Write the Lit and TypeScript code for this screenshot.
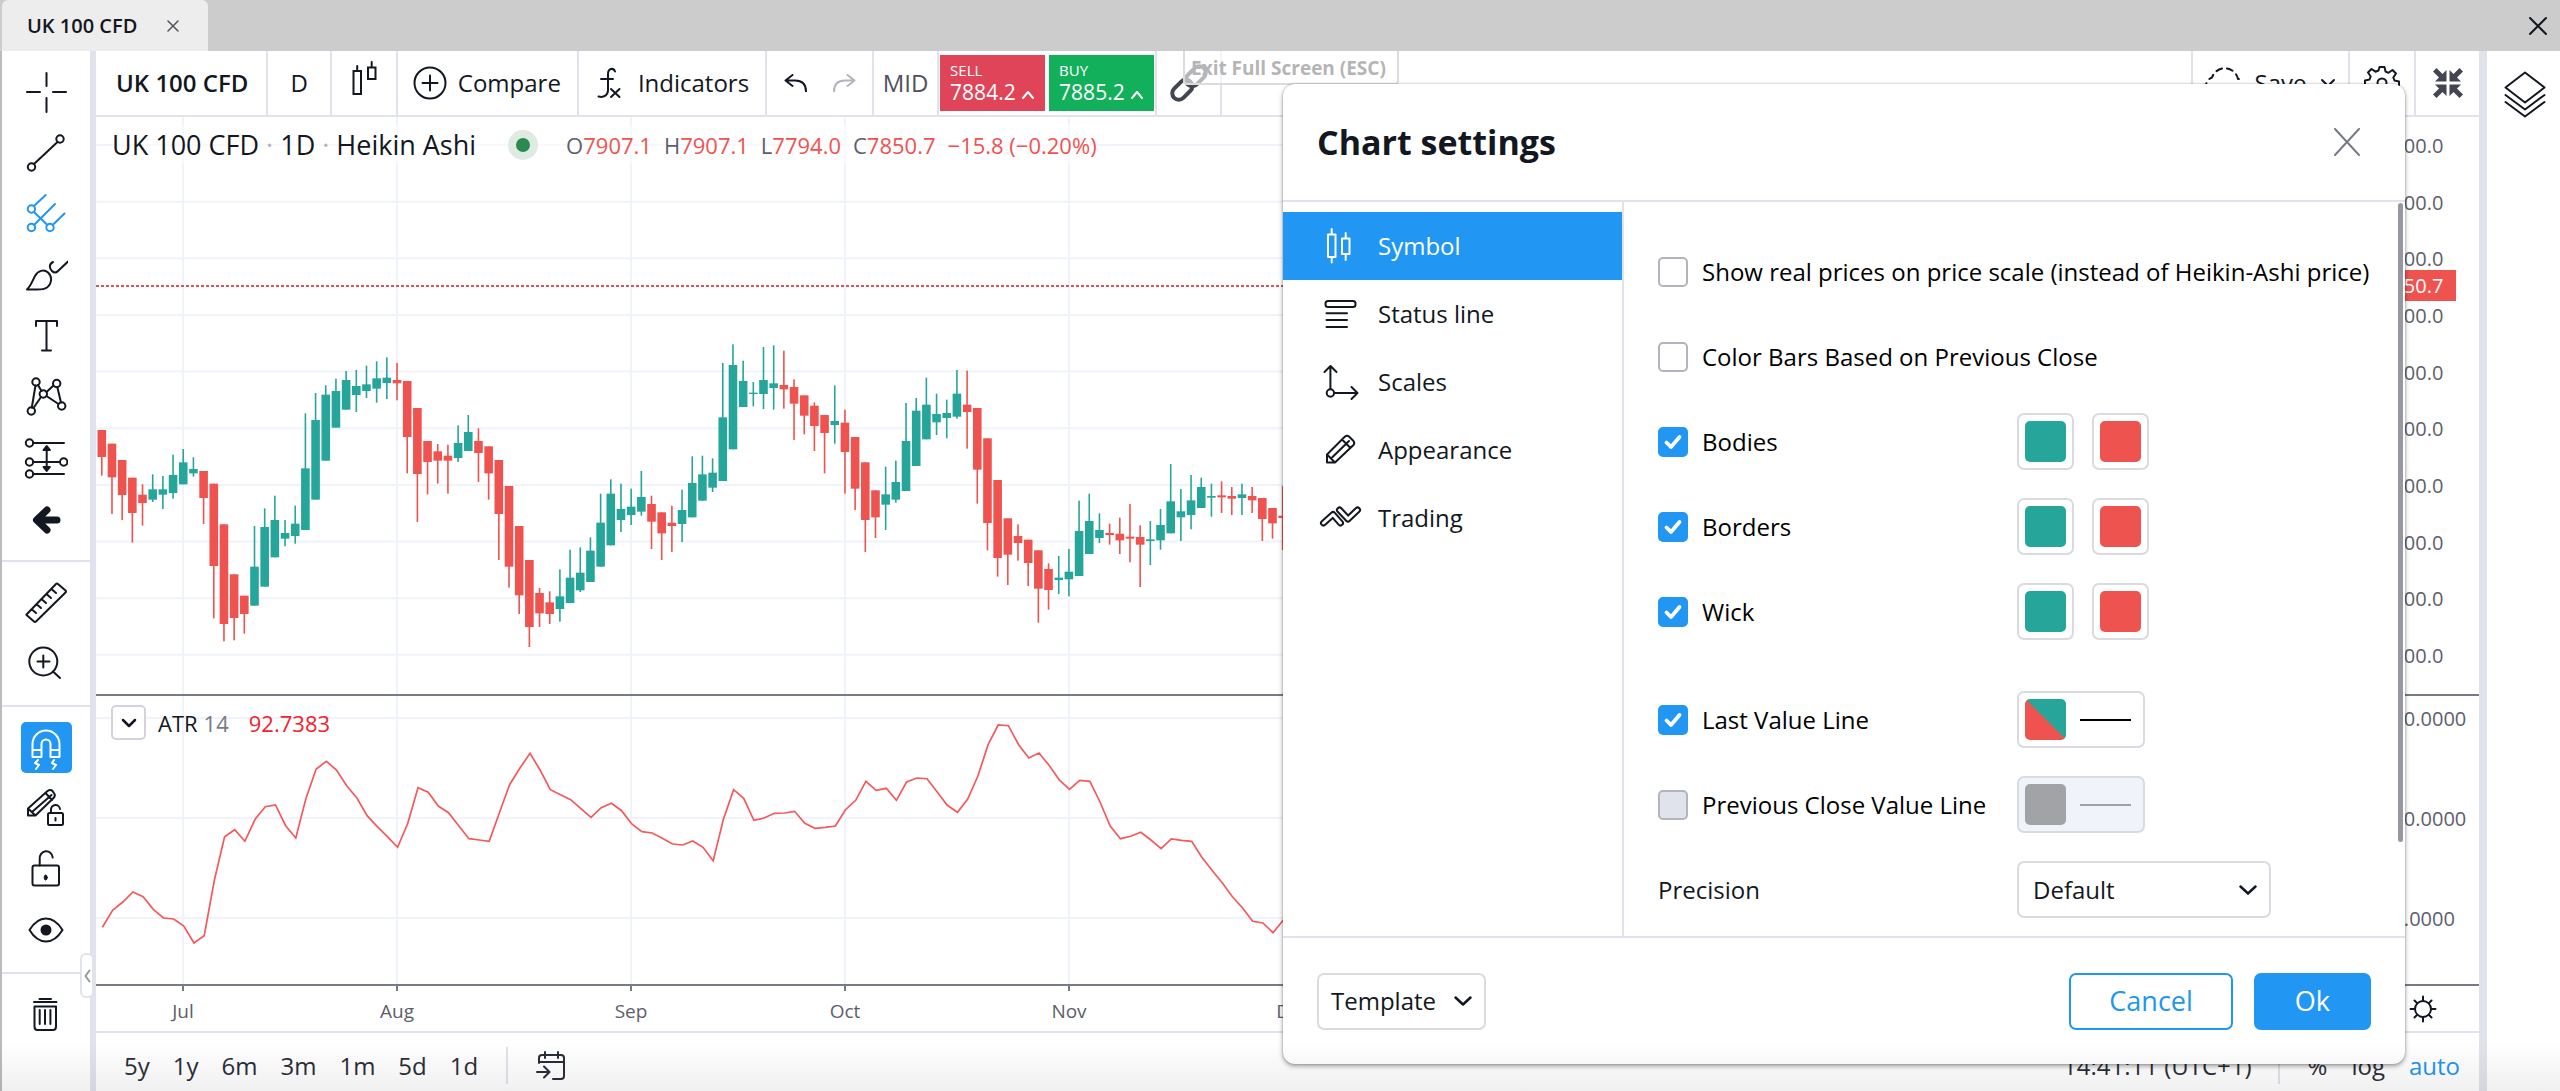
import { LitElement, html, svg, css } from "lit";
import { customElement } from "lit/decorators.js";

const STEP = 10.18;
const FIRST_X = 5.8;
const MONTHS: [string, number][] = [["Jul", 87], ["Aug", 301], ["Sep", 535], ["Oct", 749], ["Nov", 973], ["Dec", 1197]];
const PRICES = ["8100.0", "8000.0", "7900.0", "7800.0", "7700.0", "7600.0", "7500.0", "7400.0", "7300.0", "7200.0"];
const priceY = (i: number) => 28 + i * 56.65;
const ATR_LEVELS: [string, number][] = [["120.0000", 22], ["100.0000", 122], ["80.0000", 222]];

/* Heikin Ashi bars: high, body top, body bottom, low; a leading minus marks a falling bar. */
const BARS: number[][] = [
  [-330,330,411,467],[-371,371,472,582],[-420,420,525,600],[-473,473,579,668],[-493,524,549,617],[463,508,539,546],
  [468,508,524,567],[404,465,519,536],[387,427,493,493],[412,447,460,470],[-453,453,534,612],[-491,491,738,895],
  [-613,613,912,964],[-763,763,894,961],[-827,827,882,941],[618,740,857,857],[565,621,800,800],[527,600,712,712],
  [600,639,656,679],[557,611,648,671],[280,445,630,630],[219,300,539,539],[196,224,422,422],[176,213,323,323],
  [153,180,269,269],[150,198,225,276],[137,193,213,234],[124,175,206,248],[112,173,189,237],[-129,180,190,241],
  [-183,183,351,460],[-264,264,462,606],[-363,363,426,523],[-372,394,422,491],[-374,407,422,521],[316,369,414,426],
  [285,336,393,393],[-325,363,399,486],[-379,379,460,539],[-420,420,582,720],[-498,498,740,803],[-618,618,826,882],
  [-720,720,921,981],[-804,819,880,921],[-814,847,882,912],[748,829,867,905],[689,773,849,849],[682,758,811,816],
  [652,692,786,786],[521,608,740,740],[478,521,676,676],[491,567,600,636],[506,560,585,615],[453,531,575,587],
  [-527,552,605,687],[-577,577,640,720],[-557,608,618,696],[509,570,612,666],[409,489,592,592],[407,463,542,542],
  [415,458,503,516],[129,292,483,483],[73,135,388,388],[122,183,261,261],[186,218,222,259],[81,180,222,267],
  [76,190,204,269],[-92,195,208,266],[-178,201,251,360],[-226,226,287,343],[-247,257,318,393],[-285,285,339,460],
  [196,303,315,371],[-269,308,396,521],[-351,351,506,570],[-427,427,600,696],[-511,511,592,654],[440,523,554,630],
  [422,486,539,548],[249,363,513,513],[234,272,438,438],[173,254,358,358],[221,282,307,345],[239,279,294,355],
  [150,221,290,296],[-152,254,276,386],[-264,264,449,551],[-355,355,609,691],[-480,480,714,770],[-595,595,704,795],
  [-613,648,669,722],[-659,659,729,798],[-691,691,806,908],[-730,747,810,869],[708,773,780,822],[687,755,778,829],
  [542,633,768,768],[521,603,702,702],[580,630,654,669],[-611,639,645,674],[-593,641,661,702],[-552,650,656,727],
  [-616,651,674,801],[603,658,663,735],[567,615,661,689],[432,544,640,640],[507,574,592,663],[465,541,585,628],
  [473,501,564,564],[491,528,533,590],[-484,526,532,579],[-501,528,536,585],[491,523,534,585],[-501,528,541,579],
  [-534,534,597,663],[-564,564,610,656],[-498,587,594,690],
];
const barY = (v: number) => 203 + v / 3;

const ATR = [
  712,661,636,606,620,658,684,687,708,759,737,570,440,419,454,388,350,345,407,444,325,237,214,240,287,324,377,410,440,472,
  400,293,307,348,368,407,446,450,454,368,284,235,190,240,299,314,329,356,382,353,340,362,402,425,429,445,462,465,453,472,
  512,388,299,325,391,384,370,369,364,400,415,412,408,359,331,274,301,295,331,276,264,266,306,346,367,327,258,164,105,107,
  164,204,189,226,270,298,271,274,336,408,446,439,427,450,476,447,451,454,502,541,578,620,654,694,699,728,690,
];
const atrLine = ATR.map((v, i) => `${(FIRST_X + 0.6 + i * STEP).toFixed(1)},${(v / 3 - 6).toFixed(1)}`).join(" ");

const tool = {
  cross: svg`<path d="M22.500 3v13M22.500 28v14M3 22h13M29 22h13"/>`,
  line: svg`<circle cx="36" cy="8" r="3.700"/><circle cx="7.500" cy="36" r="3.700"/><path d="M10 33L33.500 11"/>`,
  fork: svg`<circle cx="7.400" cy="17" r="3.700"/><circle cx="7.400" cy="35.500" r="3.700"/><circle cx="26" cy="35.500" r="3.700"/><path d="M10 14L21.700 3M10 33L31 12M28.600 33L40.500 21.500M10 20L23.400 33"/>`,
  brush: svg`<path d="M3 36.500c4-4 5.500-9 8-13.500 3-5.500 9-7 13-3.500 4.500 4 4 11-1 15-3 2-6 2-10 2zM29 9c-4 2-4 6-1 9 2 2 4 2 6 0L44 8.500"/>`,
  text: svg`<path d="M12 12V7h21v5M22.500 7v29M18 36.500h9"/>`,
  pattern: svg`<path d="M14 10L17.500 16M22.500 17L29.500 10.500M11.500 10.500L7.800 32.500M9.500 33L17 22M22.500 21L34.500 29M33.300 12L37 27.500"/><circle cx="12" cy="7" r="3.700"/><circle cx="32.700" cy="8.500" r="3.700"/><circle cx="19.300" cy="19" r="3.700"/><circle cx="7.300" cy="36" r="3.700"/><circle cx="37.700" cy="31" r="3.700"/>`,
  position: svg`<circle cx="5.500" cy="7" r="3.700"/><circle cx="5.500" cy="26" r="3.700"/><circle cx="5.500" cy="38" r="3.700"/><circle cx="39.700" cy="26" r="3.700"/><path d="M9 7h31M9 26h27M9 38h31M22.700 13v20"/><path fill="currentColor" d="M19.500 14l3.200-4 3.200 4zM19.500 31l3.200 4 3.200-4z"/>`,
  arrow: svg`<path stroke-width="7" d="M33 23H14M23 13L12.500 23 23 33"/>`,
  ruler: svg`<path d="M2.500 33.500L32 3q1-1 2 0l7.500 6.500q1 1 0 2L12 40.500q-1 1-2 0L2.500 34zM8 28.500l4 3.500M13 23.500l4 3.500M18 18.500l4 3.500M23 13.500l4 3.500M28 8.500l4 3.500"/>`,
  zoom: svg`<circle cx="19.300" cy="19.500" r="14"/><path d="M29 29.500l7 6.500M13.500 19.500h12M19.300 13.500v12"/>`,
  magnet: svg`<path d="M8.500 31V18a13.500 13.500 0 0 1 27 0v13h-9V18a4.500 4.500 0 0 0-9 0v13zM8.500 24h9M26.500 24h9M14 34l-3 3 4 2-3 4M30 34l-2 3 4 2-3 4"/>`,
  pencilLock: svg`<path d="M4 28.500v-7L23.500 4q3-2 5 0l2 3q1 2-1 4L11.500 28.500zM4 21.500l7.500 7M8 25L27.500 8M21.500 6l6.500 7"/><rect x="24" y="26" width="15" height="12" rx="1.500"/><path d="M27 26v-3a4.500 4.500 0 0 1 9-1M31.500 31v2.500"/>`,
  lock: svg`<rect x="8.500" y="17.500" width="26.500" height="20" rx="2"/><path d="M15.700 17.500V11a6.500 7 0 0 1 13-1.500"/><ellipse cx="21.700" cy="29.500" rx="1.500" ry="2.500" fill="currentColor" stroke-width="1"/>`,
  eye: svg`<path d="M5.500 21q7-11.500 16.500-11.500T38.500 21Q31.500 32.500 22 32.500T5.500 21z"/><circle cx="22" cy="21" r="4.500" fill="currentColor"/>`,
  trash: svg`<path d="M10 9h22.500M15.500 6h11.500M10.500 13.500h21.500v20q0 3.500-3 3.500H13.500q-3 0-3-3.500zM15.700 17v14M21 17v14M26.400 17v14"/>`,
};

const side = {
  symbol: svg`<path d="M10 10.500h7.500V33H10zM24 14.500h7.500V30H24zM13.700 5v5.500M13.700 33v5.500M27.700 9v5.500M27.700 30v6"/>`,
  status: svg`<rect x="7.500" y="9" width="30" height="6" rx="2.500"/><path d="M8.500 21.300h20.500M8.500 28h20.500M8.500 35h20.500"/>`,
  scales: svg`<circle cx="12.400" cy="33" r="3.700"/><path d="M12.400 29V6.500M6.500 12l6-6 6 6M16.500 33H39M33.500 27l6 6-6 6"/>`,
  appearance: svg`<path d="M9 34.500v-8L27 8.500q2-1.500 4 0l4.500 4.500q1.500 2 0 4L17 34.500zM9 26.500l8 8M13 30.500L31 13M24 11.500l8.500 8.500"/>`,
  trading: svg`<path stroke-width="7" d="M5.500 27L15 18.500 22.500 27"/><path stroke="#fff" stroke-width="3" d="M5.500 27L15 18.500 22.500 27"/><path stroke-width="7" d="M21.500 14L30 23 39.500 14"/><path stroke="#fff" stroke-width="3" d="M21.500 14L30 23 39.500 14"/>`,
};

const icon = (body: unknown, w = 44, h = 44) =>
  html`<svg class="icon" width=${w} height=${h} viewBox="0 0 ${w} ${h}" aria-hidden="true">${body}</svg>`;
const chevron = icon(svg`<path stroke-width="2.500" d="M1.500 1.500L9 8.500l7.500-7"/>`, 18, 10);

const TOOL_GROUPS: [string, unknown, string?][][] = [
  [["Cross", tool.cross], ["Trend line", tool.line], ["Pitchfork", tool.fork, "active"], ["Brush", tool.brush], ["Text", tool.text], ["Pattern", tool.pattern], ["Position", tool.position], ["Arrow", tool.arrow]],
  [["Measure", tool.ruler], ["Zoom in", tool.zoom]],
  [["Magnet", tool.magnet, "filled"], ["Stay in drawing mode", tool.pencilLock], ["Lock drawings", tool.lock], ["Hide drawings", tool.eye]],
  [["Remove drawings", tool.trash]],
];

@customElement("settings-dialog")
export class SettingsDialog extends LitElement {
  static styles = css`
    :host { display: flex; flex-direction: column; background: #fff; border-radius: 12px; box-shadow: 0 2px 5px rgba(0,0,0,.38), 0 0 2px rgba(0,0,0,.25); overflow: hidden; color: #131722; font: 24px/32px "Open Sans", sans-serif; }
    * { box-sizing: border-box; }
    button, select { font: inherit; color: inherit; cursor: pointer; }
    .icon { display: block; fill: none; stroke: currentColor; stroke-width: 2; stroke-linecap: round; stroke-linejoin: round; flex: none; }
    header { display: flex; align-items: center; justify-content: space-between; height: 118px; padding: 0 44px 0 34px; border-bottom: 2px solid #e0e3eb; flex: none; }
    h2 { margin: 0; font-size: 34px; line-height: 44px; font-weight: 700; }
    .close { border: 0; background: none; padding: 0; color: #787b86; }
    .body { flex: 1; display: flex; min-height: 0; position: relative; }
    nav { width: 341px; padding-top: 10px; border-right: 2px solid #e0e3eb; flex: none; }
    .tab { display: flex; align-items: center; gap: 16px; width: 100%; height: 68px; padding: 0 0 0 35px; border: 0; background: none; text-align: left; }
    .tab.on { background: #2196f3; color: #fff; }
    .fields { flex: 1; padding: 27px 34px 0; min-width: 0; overflow: hidden; }
    .row { display: flex; align-items: center; height: 85px; color: #000; white-space: nowrap; }
    .row.gap { margin-top: 23px; }
    .row > label { display: flex; align-items: center; gap: 14px; min-width: 359px; }
    .row > .plain { color: #131722; }
    input { appearance: none; margin: 0; width: 30px; height: 30px; border: 2px solid #b2b5be; border-radius: 5px; background: #fff; flex: none; }
    input:checked { border-color: #2196f3; background: #2196f3 url('data:image/svg+xml,<svg xmlns="http://www.w3.org/2000/svg" viewBox="0 0 26 26"><path d="M6.500 13.500l4.500 4.500 8.500-10" fill="none" stroke="white" stroke-width="3.800" stroke-linecap="round" stroke-linejoin="round"/></svg>') center / 26px 26px no-repeat; }
    input.dim { background: #e0e3eb; }
    .swatches { display: flex; gap: 18px; }
    .box { display: flex; align-items: center; gap: 14px; height: 57px; padding: 0 6px; border: 2px solid #d9dbe1; border-radius: 7px; background: #fff; }
    .box.wide { width: 128px; }
    .box.dim { background: #f0f3fa; color: #9fa1a8; }
    .color { width: 41px; height: 41px; border-radius: 5px; }
    .up { background: #26a69a; }
    .down { background: #ef5350; }
    .both { background: linear-gradient(to top right, #ef5350 50%, #26a69a 50%); }
    .none { background: #a2a3a7; }
    .stroke { width: 51px; height: 2px; background: currentColor; }
    select { appearance: none; width: 254px; height: 57px; padding: 0 14px; border: 2px solid #d9dbe1; border-radius: 7px; color: #131722; background: #fff url('data:image/svg+xml,<svg xmlns="http://www.w3.org/2000/svg" viewBox="0 0 18 10"><path d="M1.500 1.500L9 8.500l7.500-7" fill="none" stroke="%23131722" stroke-width="2.500" stroke-linecap="round"/></svg>') right 12px center / 18px 10px no-repeat; }
    .thumb { position: absolute; right: 2px; top: 1px; width: 5px; height: 639px; border-radius: 3px; background: #9598a1; }
    footer { display: flex; align-items: center; gap: 21px; height: 128px; padding: 0 34px; border-top: 2px solid #e0e3eb; flex: none; }
    .menu { display: flex; align-items: center; gap: 18px; height: 57px; padding: 0 12px; margin-right: auto; border: 2px solid #d9dbe1; border-radius: 7px; background: #fff; }
    .cancel, .ok { height: 57px; font-size: 27px; border: 2px solid #2196f3; border-radius: 7px; }
    .cancel { padding: 0 38px; background: #fff; color: #2196f3; }
    .ok { padding: 0 39px; background: #2196f3; color: #fff; }
  `;

  private colorRow(label: string) {
    return html`<div class="row"><label><input type="checkbox" checked>${label}</label>
      <div class="swatches">
        <button class="box" aria-label="${label} up colour"><span class="color up"></span></button>
        <button class="box" aria-label="${label} down colour"><span class="color down"></span></button>
      </div></div>`;
  }

  render() {
    const tabs: [string, unknown][] = [["Symbol", side.symbol], ["Status line", side.status], ["Scales", side.scales], ["Appearance", side.appearance], ["Trading", side.trading]];
    return html`
      <header><h2>Chart settings</h2>
        <button class="close" aria-label="Close">${icon(svg`<path d="M2 1l24 26M26 1L2 27"/>`, 28, 28)}</button></header>
      <div class="body">
        <nav>${tabs.map(([t, i], n) => html`<button class="tab ${n ? "" : "on"}">${icon(i)}${t}</button>`)}</nav>
        <div class="fields">
          <div class="row"><label><input type="checkbox">Show real prices on price scale (instead of Heikin-Ashi price)</label></div>
          <div class="row"><label><input type="checkbox">Color Bars Based on Previous Close</label></div>
          ${["Bodies", "Borders", "Wick"].map((l) => this.colorRow(l))}
          <div class="row gap"><label><input type="checkbox" checked>Last Value Line</label>
            <button class="box wide" aria-label="Last value line style"><span class="color both"></span><span class="stroke"></span></button></div>
          <div class="row"><label><input type="checkbox" class="dim">Previous Close Value Line</label>
            <button class="box wide dim" aria-label="Previous close line style"><span class="color none"></span><span class="stroke"></span></button></div>
          <div class="row"><label class="plain" for="precision">Precision</label>
            <select id="precision"><option>Default</option></select></div>
        </div>
        <div class="thumb"></div>
      </div>
      <footer><button class="menu">Template ${chevron}</button><button class="cancel">Cancel</button><button class="ok">Ok</button></footer>`;
  }
}

@customElement("app-root")
export class AppRoot extends LitElement {
  static styles = css`
    :host { display: flex; flex-direction: column; position: relative; height: 100vh; overflow: hidden; background: #fff; color: #131722; font: 24px/32px "Open Sans", sans-serif; }
    * { box-sizing: border-box; }
    button { font: inherit; color: inherit; border: 0; background: none; padding: 0; cursor: pointer; }
    .icon { display: block; fill: none; stroke: currentColor; stroke-width: 2; stroke-linecap: round; stroke-linejoin: round; flex: none; }
    .tabs { display: flex; align-items: stretch; justify-content: space-between; height: 51px; padding-right: 13px; background: #ccc; flex: none; position: relative; z-index: 1; }
    .tab { display: flex; align-items: center; gap: 30px; padding: 0 29px 0 25px; margin-left: 2px; border-radius: 6px 6px 0 0; background: #ededed; font-size: 20px; font-weight: 600; }
    .tab .icon { color: #50535e; stroke-width: 1.5; }
    .work { flex: 1; display: flex; min-height: 0; }
    .tools { width: 96px; border-left: 2px solid #bbb; border-right: 6px solid #e0e3eb; flex: none; }
    .group { display: flex; flex-direction: column; align-items: center; padding: 10px 0 11px; border-bottom: 2px solid #e0e3eb; }
    .group:last-child { border-bottom: 0; }
    .tool { display: flex; align-items: center; justify-content: center; width: 51px; height: 51px; margin: 5px 0; border-radius: 5px; }
    .tool.active { color: #2196f3; }
    .tool.filled { background: #2196f3; color: #fff; }
    .handle { position: absolute; left: 80px; top: 953px; width: 14px; height: 45px; border: 2px solid #e0e3eb; border-radius: 6px; background: #fff; display: flex; align-items: center; justify-content: center; color: #9598a1; }
    .main { flex: 1; display: flex; flex-direction: column; min-width: 0; }
    .bar { display: flex; height: 66px; border-bottom: 2px solid #e0e3eb; flex: none; position: relative; }
    .cell { display: flex; align-items: center; justify-content: center; border-right: 2px solid #e0e3eb; white-space: nowrap; }
    .cell.name { padding: 0 18px 0 20px; font-weight: 600; }
    .cell.pad { padding: 0 22px; }
    .cell.style { width: 66px; }
    .cell.wide { padding: 0 16px 0 15px; gap: 11px; }
    .cell.formula { gap: 14px; }
    .cell.undo { width: 107px; gap: 24px; }
    .faint { color: #b2b5be; }
    .cell.mid { width: 65px; color: #50535e; }
    .cell.quotes { gap: 4px; width: 218px; }
    .quote { width: 105px; height: 56px; padding: 0 0 2px 10px; color: #fff; text-align: left; font-size: 21px; line-height: 24px; }
    .quote small { display: block; font-size: 15px; line-height: 20px; }
    .quote .icon { display: inline-block; margin-left: 6px; }
    .sell { background: #df4458; }
    .buy { background: #12b05a; }
    .cell.link { width: 65px; color: #434651; }
    .cell.save { width: 159px; gap: 14px; margin-left: auto; border-left: 2px solid #e0e3eb; }
    .cell.gear { width: 66px; }
    .cell.exit { width: 63px; border-right: 0; color: #434651; }
    .tip { position: absolute; left: 1087px; top: -20px; height: 54px; padding: 22px 11px 0 6px; border: 2px solid #dcdcdc; border-radius: 4px; background: rgba(255,255,255,.6); color: #b5b5b5; font-size: 19px; line-height: 26px; font-weight: 700; }
    .pane { display: flex; min-height: 0; position: relative; }
    .price { flex: 577; border-bottom: 2px solid #787b86; }
    .atr { flex: 288; border-bottom: 2px solid #787b86; }
    .plot { flex: 1; min-width: 0; height: 100%; display: block; }
    .scale { width: 110px; height: 100%; display: block; flex: none; }
    .grid { stroke: #f0f3fa; stroke-width: 2; }
    .label { font-size: 20px; fill: #5d606b; }
    .label.current { fill: #fff; }
    .last { stroke: #d9535a; stroke-width: 2; stroke-dasharray: 3 2; }
    .legend { position: absolute; left: 16px; top: 9px; display: flex; align-items: center; font-size: 22px; color: #5d606b; white-space: nowrap; background: rgba(255,255,255,.5); }
    .legend .title { display: flex; gap: 7px; font-size: 27px; line-height: 38px; color: #131722; }
    .legend .dot { color: #b2b5be; }
    .status { width: 30px; height: 30px; margin: 0 28px 0 32px; border-radius: 50%; border: 8px solid #dfeae3; background: #2a8a4f; }
    .ohlc { display: flex; gap: 12px; }
    .ohlc b { font-weight: 400; color: #ef5350; }
    .study { position: absolute; left: 15px; top: 9px; display: flex; align-items: center; font-size: 22px; }
    .study button { display: flex; align-items: center; justify-content: center; width: 35px; height: 35px; margin-right: 12px; border: 2px solid #d1d4dc; border-radius: 5px; background: #fff; }
    .study .length { margin: 0 20px 0 6px; color: #787b86; }
    .study .value { color: #f7202c; }
    .time { display: flex; height: 47px; border-bottom: 2px solid #e0e3eb; flex: none; }
    .time .label { font-size: 19px; text-anchor: middle; }
    .corner { display: flex; align-items: center; width: 110px; padding-left: 40px; }
    .bottom { display: flex; align-items: center; height: 58px; padding: 7px 19px 0 28px; flex: none; white-space: nowrap; color: #2a2e39; }
    .ranges { display: flex; gap: 23px; }
    .rule { width: 2px; height: 37px; background: #e0e3eb; margin: 0 28px; }
    .modes { margin-left: auto; display: flex; align-items: center; gap: 24px; }
    .modes .rule { margin: 0 4px 0 2px; }
    .auto { color: #2196f3; }
    .right { width: 81px; border-left: 8px solid #e0e3eb; padding: 20px 0 0 17px; flex: none; }
    .dialog { position: absolute; right: 155px; top: 84px; bottom: 27px; width: 1122px; }
    .shade { position: absolute; left: 0; right: 0; bottom: 0; height: 50px; background: linear-gradient(transparent, rgba(0,0,0,.06)); pointer-events: none; }
  `;

  render() {
    const upChevron = icon(svg`<path d="M1 8l5-6 5 6"/>`, 12, 10);
    return html`
      <div class="tabs">
        <div class="tab">UK 100 CFD <button aria-label="Close tab">${icon(svg`<path d="M1 1l10 10M11 1L1 11"/>`, 12, 12)}</button></div>
        <button aria-label="Close window">${icon(svg`<path d="M1 1l16 16M17 1L1 17"/>`, 18, 18)}</button>
      </div>
      <div class="work">
        <div class="tools">${TOOL_GROUPS.map((g) => html`<div class="group">${g.map(([name, i, c]) => html`<button class="tool ${c ?? ""}" aria-label=${name}>${icon(i)}</button>`)}</div>`)}</div>
        <div class="main">
          <div class="bar">
            <button class="cell name">UK 100 CFD</button>
            <button class="cell pad">D</button>
            <button class="cell style" aria-label="Chart style">${icon(svg`<path stroke-linejoin="miter" d="M4.500 10h7.500v23H4.500zM19 6.500h7.500V18H19zM8.200 5v5M22.700 1v5.500"/>`, 30, 44)}</button>
            <button class="cell wide">${icon(svg`<circle cx="17" cy="17" r="15.500"/><path d="M9.500 17h15M17 9.500v15"/>`, 34, 34)}Compare</button>
            <button class="cell wide formula">${icon(svg`<path d="M21 5.500C19.500 1.500 14 2 14 8v16c0 5-4 8-9.500 6.500M7 13h12M17 23l8.500 8M25.500 23L17 31"/>`, 30, 34)}Indicators</button>
            <div class="cell undo">
              <button aria-label="Undo">${icon(svg`<path d="M8.500 1L1.500 6.500l7 5.500M2 6.500h9c7 0 11 4 11 11"/>`, 24, 18)}</button>
              <button class="faint" aria-label="Redo">${icon(svg`<path d="M15.500 1l7 5.500-7 5.500M22 6.500h-9c-7 0-11 4-11 11"/>`, 24, 18)}</button>
            </div>
            <button class="cell mid">MID</button>
            <div class="cell quotes">
              <button class="quote sell"><small>SELL</small>7884.2${upChevron}</button>
              <button class="quote buy"><small>BUY</small>7885.2${upChevron}</button>
            </div>
            <button class="cell link" aria-label="Link">${icon(svg`<g transform="rotate(-45 19 19)" stroke-width="4"><rect x="-2" y="12.500" width="23" height="13" rx="6.500"/><rect x="17" y="12.500" width="23" height="13" rx="6.500"/></g>`, 38, 38)}</button>
            <button class="cell save">${icon(svg`<path stroke-dasharray="6 5" d="M10 30a9 9 0 0 1-3-17.500 13.500 13.500 0 0 1 26 1.500 8 8 0 0 1-1 16z"/>`, 36, 36)}Save${icon(svg`<path d="M2 2l6 6 6-6"/>`, 16, 10)}</button>
            <button class="cell gear" aria-label="Settings">${icon(svg`<circle cx="18" cy="18" r="4.500"/><path d="M15.500 2h5l1 4.500 3 1.300L28.500 5l3.500 3.500-2.700 4 1.200 3 4.500 1v5l-4.500 1-1.200 3L32 28.500 28.500 32l-4-2.700-3 1.200-1 4.500h-5l-1-4.500-3-1.200-4 2.700L4 28.500l2.700-4-1.200-3L1 20.500v-5l4.500-1 1.200-3L4 7.500 7.500 4l4 2.700 3-1.200z"/>`, 36, 36)}</button>
            <button class="cell exit" aria-label="Exit full screen">${icon(svg`<path fill="currentColor" stroke="none" d="M14.500 14.500H3l4-4L1 4.500 4.500 1l6 6 4-4zM17.500 14.500H29l-4-4 6-6L27.500 1l-6 6-4-4zM14.500 17.500H3l4 4-6 6L4.500 31l6-6 4 4zM17.500 17.500H29l-4 4 6 6-3.500 3.500-6-6-4 4z"/>`, 32, 32)}</button>
            <div class="tip" role="tooltip">Exit Full Screen (ESC)</div>
          </div>
          <div class="pane price">
            <svg class="plot">
              <g class="grid">${MONTHS.map(([, x]) => svg`<line x1=${x} x2=${x} y1="0" y2="100%"/>`)}${PRICES.map((_, i) => svg`<line x1="0" x2="100%" y1=${priceY(i)} y2=${priceY(i)}/>`)}</g>
              ${BARS.map(([h, t, b, l], i) => {
                const x = FIRST_X + i * STEP;
                const c = h < 0 ? "#ef5350" : "#26a69a";
                return svg`<rect x=${x - 0.8} y=${barY(Math.abs(h))} width="1.6" height=${(l - Math.abs(h)) / 3} fill=${c}/><rect x=${x - 4.3} y=${barY(t)} width="8.6" height=${(b - t) / 3} fill=${c}/>`;
              })}
              <line class="last" x1="0" x2="100%" y1="169" y2="169"/>
            </svg>
            <svg class="scale">
              ${PRICES.map((p, i) => svg`<text class="label" x="12" y=${priceY(i) + 8}>${p}</text>`)}
              <rect x="0" y="153" width="87" height="31" fill="#ef5350"/>
              <text class="label current" x="12" y="176">7850.7</text>
            </svg>
            <div class="legend">
              <div class="title"><span>UK 100 CFD</span><span class="dot">·</span><span>1D</span><span class="dot">·</span><span>Heikin Ashi</span></div>
              <span class="status"></span>
              <div class="ohlc"><span>O<b>7907.1</b></span><span>H<b>7907.1</b></span><span>L<b>7794.0</b></span><span>C<b>7850.7</b></span><b>−15.8 (−0.20%)</b></div>
            </div>
          </div>
          <div class="pane atr">
            <svg class="plot">
              <g class="grid">${MONTHS.map(([, x]) => svg`<line x1=${x} x2=${x} y1="0" y2="100%"/>`)}${ATR_LEVELS.map(([, y]) => svg`<line x1="0" x2="100%" y1=${y} y2=${y}/>`)}</g>
              <polyline points=${atrLine} fill="none" stroke="#f5595c" stroke-width="1.7"/>
            </svg>
            <svg class="scale">${ATR_LEVELS.map(([p, y]) => svg`<text class="label" x="12" y=${y + 8}>${p}</text>`)}</svg>
            <div class="study"><button aria-label="Collapse">${icon(svg`<path stroke-width="2.500" d="M2 2l6 6 6-6"/>`, 16, 10)}</button><span>ATR</span><span class="length">14</span><span class="value">92.7383</span></div>
          </div>
          <div class="time">
            <svg class="plot">${MONTHS.map(([m, x]) => svg`<line x1=${x} x2=${x} y1="0" y2="5" stroke="#787b86" stroke-width="2"/><text class="label" x=${x} y="32">${m}</text>`)}</svg>
            <div class="corner">${icon(svg`<circle cx="14" cy="14" r="8"/><path d="M14 1.500v4M14 22.500v4M1.500 14h4M22.500 14h4M5.500 5.500l2.500 2.500M20 20l2.500 2.500M5.500 22.500L8 20M20 8l2.500-2.500"/>`, 28, 28)}</div>
          </div>
          <div class="bottom">
            <div class="ranges">${["5y", "1y", "6m", "3m", "1m", "5d", "1d"].map((r) => html`<button>${r}</button>`)}</div>
            <span class="rule"></span>
            <button aria-label="Go to date">${icon(svg`<path d="M3 12V7q0-3 3-3h19q3 0 3 3v18q0 3-3 3h-8M3 11h25M9 1v6M22 1v6M1 21h11M8 15.500l5.500 5.500L8 26.500"/>`, 30, 30)}</button>
            <div class="modes"><button>14:41:11 (UTC+1)</button><span class="rule"></span><button>%</button><button>log</button><button class="auto">auto</button></div>
          </div>
        </div>
        <div class="right"><button aria-label="Layers">${icon(svg`<path d="M21 1.500L40.500 16.500 21 31.500 1.500 16.500zM1.500 24L21 38.500 40.500 24M1.500 31L21 45.500 40.500 31"/>`, 42, 47)}</button></div>
      </div>
      <button class="handle" aria-label="Hide drawing toolbar">${icon(svg`<path d="M5.500 1.500L1.500 7l4 5.500"/>`, 7, 14)}</button>
      <settings-dialog class="dialog" role="dialog" aria-label="Chart settings"></settings-dialog>
      <div class="shade"></div>`;
  }
}
